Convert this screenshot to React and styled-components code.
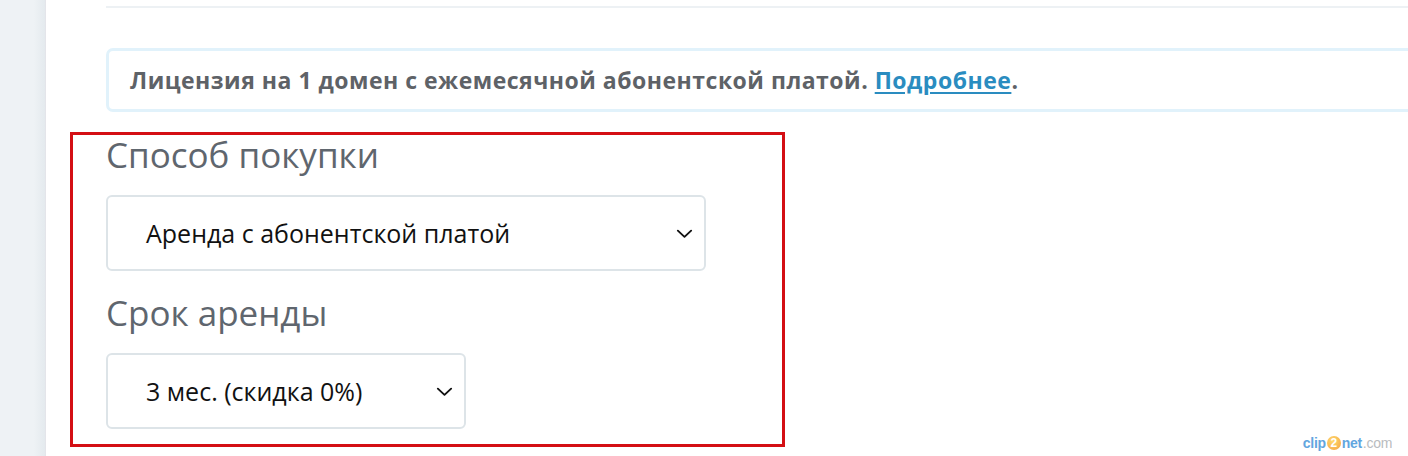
import styled, { createGlobalStyle } from 'styled-components';

const GlobalStyle = createGlobalStyle`
  html, body {
    margin: 0;
    padding: 0;
    background: #ffffff;
    overflow: hidden;
  }
  body {
    font-family: "Open Sans", "Noto Sans", sans-serif;
  }
`;

const Page = styled.div`
  display: flex;
  width: 1408px;
  height: 456px;
  position: relative;
  overflow: hidden;
`;

const Sidebar = styled.div`
  flex: 0 0 45px;
  background: linear-gradient(to right, #eef2f5 75%, #e4eaee);
  border-right: 1px solid #e4e5ea;
`;

const Main = styled.div`
  flex: 1;
  padding-left: 60px;
`;

const Content = styled.div`
  width: 1320px;
`;

const Divider = styled.div`
  height: 2px;
  margin-top: 6px;
  background: #edf1f4;
`;

const Notice = styled.div`
  margin-top: 40px;
  height: 64px;
  box-sizing: border-box;
  border: 3px solid #e1f2fb;
  border-radius: 7px;
  padding-left: 21px;
  display: flex;
  align-items: center;
  font-size: 23px;
  font-weight: 700;
  color: #5e6267;
  letter-spacing: 0.5px;
`;

const MoreLink = styled.a`
  color: #2a8cc0;
  text-decoration: underline;
  text-underline-offset: 3px;
  text-decoration-thickness: 2px;
`;

const Highlight = styled.div`
  margin-top: 20px;
  margin-left: -36px;
  width: 715px;
  height: 315px;
  box-sizing: border-box;
  border: 3px solid #d40f14;
  padding: 1px 0 0 33px;
`;

const FieldTitle = styled.div`
  font-size: 35px;
  line-height: 38px;
  color: #5f666e;
  margin-top: ${({ $first }) => ($first ? '0' : '23px')};
  margin-bottom: 21px;
`;

const SelectBox = styled.div`
  width: ${({ $w }) => $w}px;
  height: 76px;
  box-sizing: border-box;
  border: 2px solid #dde4e8;
  border-radius: 6px;
  display: flex;
  align-items: center;
  justify-content: space-between;
  padding: 0 10px 0 38px;
  font-size: 25px;
  color: #111;
`;

const Chevron = ({ size = 19 }) => (
  <svg width={size} height={size} viewBox="0 0 20 20" fill="none">
    <path d="M3 7 L10 13.5 L17 7" stroke="#111" strokeWidth="2" strokeLinecap="round" strokeLinejoin="round" />
  </svg>
);

const Watermark = styled.div`
  position: absolute;
  right: 16px;
  bottom: 5px;
  display: flex;
  align-items: center;
  font-family: "Liberation Sans", Arial, sans-serif;
  font-size: 14px;
  font-weight: 700;
  letter-spacing: -0.3px;
  color: #3a90d8;
  opacity: 0.8;
`;

const Two = styled.span`
  display: inline-flex;
  align-items: center;
  justify-content: center;
  width: 14px;
  height: 14px;
  margin: 0 1px;
  border-radius: 50%;
  background: radial-gradient(circle at 40% 35%, #ffd24a, #f28a12);
  color: #fff;
  font-size: 12px;
`;

const Dim = styled.span`
  color: #a8acb0;
  font-weight: 400;
  margin-left: 1px;
`;

export default function App() {
  return (
    <Page>
      <GlobalStyle />
      <Sidebar />
      <Main>
        <Content>
          <Divider />
          <Notice>
            <span>
              Лицензия на 1 домен с ежемесячной абонентской платой.{' '}
              <MoreLink href="#">Подробнее</MoreLink>.
            </span>
          </Notice>
        </Content>
        <Highlight>
          <FieldTitle $first>Способ покупки</FieldTitle>
          <SelectBox $w={600}>
            <span>Аренда с абонентской платой</span>
            <Chevron />
          </SelectBox>
          <FieldTitle>Срок аренды</FieldTitle>
          <SelectBox $w={360}>
            <span>3 мес. (скидка 0%)</span>
            <Chevron />
          </SelectBox>
        </Highlight>
      </Main>
      <Watermark>
        clip<Two>2</Two>net<Dim>.com</Dim>
      </Watermark>
    </Page>
  );
}
